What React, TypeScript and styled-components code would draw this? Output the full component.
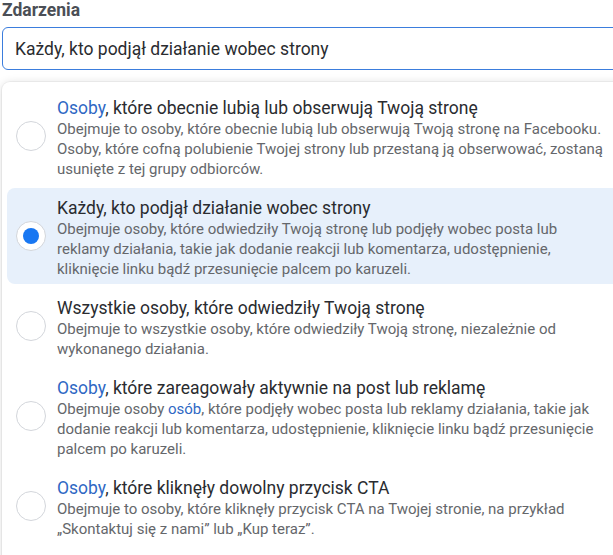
import React from "react";
import styled, { createGlobalStyle, css } from "styled-components";

const GlobalStyle = createGlobalStyle`
  html, body {
    margin: 0;
    padding: 0;
    background: #ffffff;
    overflow: hidden;
  }
  body {
    font-family: Roboto, "Liberation Sans", Arial, sans-serif;
  }
`;

const Page = styled.div`
  width: 680px;
  padding: 0 0 0 2px;
  box-sizing: border-box;
`;

const Label = styled.div`
  font-size: 17.5px;
  font-weight: 700;
  line-height: 20px;
  color: #4b4f56;
`;

const Input = styled.div`
  margin-top: 7px;
  height: 43px;
  box-sizing: border-box;
  border: 1px solid #3b7ddd;
  border-radius: 6px;
  display: flex;
  align-items: center;
  padding-left: 12px;
  font-size: 17.5px;
  color: #2a2c30;
`;

const Panel = styled.div`
  margin-top: 12px;
  background: #ffffff;
  border-radius: 8px 8px 0 0;
  box-shadow: 0 1px 10px rgba(0, 0, 0, 0.14), 0 0 0 1px rgba(0, 0, 0, 0.04);
  padding: 6px 0 0 5px;
  height: 520px;
  box-sizing: border-box;
  display: flex;
  flex-direction: column;
  gap: 4px;
`;

const Option = styled.div<{ $selected?: boolean }>`
  display: flex;
  align-items: center;
  gap: 11px;
  padding: 9px 10px 5px 9px;
  border-radius: 8px;
  ${(p) =>
    p.$selected &&
    css`
      background: #e7f0fb;
    `}
`;

const Radio = styled.span<{ $checked?: boolean }>`
  flex: none;
  width: 30px;
  height: 30px;
  box-sizing: border-box;
  border-radius: 50%;
  border: 1px solid #d3d6db;
  background: #ffffff;
  display: flex;
  align-items: center;
  justify-content: center;
  margin-top: -4px;
  &::after {
    content: "";
    display: ${(p) => (p.$checked ? "block" : "none")};
    width: 16px;
    height: 16px;
    border-radius: 50%;
    background: #1877f2;
  }
`;

const Texts = styled.div`
  display: flex;
  flex-direction: column;
`;

const Title = styled.div`
  font-size: 17.5px;
  line-height: 22px;
  color: #2a2c30;
  white-space: nowrap;
`;

const Desc = styled.div`
  font-size: 15px;
  line-height: 20px;
  color: #65676b;
  white-space: nowrap;
`;

const Line = styled.span`
  display: block;
`;

const Link = styled.span`
  color: #2f68c4;
`;

type Seg = string | { link: string };
type Item = { title: Seg[]; lines: Seg[][]; selected?: boolean };

const items: Item[] = [
  {
    title: [{ link: "Osoby" }, ", które obecnie lubią lub obserwują Twoją stronę"],
    lines: [
      ["Obejmuje to osoby, które obecnie lubią lub obserwują Twoją stronę na Facebooku."],
      ["Osoby, które cofną polubienie Twojej strony lub przestaną ją obserwować, zostaną"],
      ["usunięte z tej grupy odbiorców."],
    ],
  },
  {
    selected: true,
    title: ["Każdy, kto podjął działanie wobec strony"],
    lines: [
      ["Obejmuje osoby, które odwiedziły Twoją stronę lub podjęły wobec posta lub"],
      ["reklamy działania, takie jak dodanie reakcji lub komentarza, udostępnienie,"],
      ["kliknięcie linku bądź przesunięcie palcem po karuzeli."],
    ],
  },
  {
    title: ["Wszystkie osoby, które odwiedziły Twoją stronę"],
    lines: [
      ["Obejmuje to wszystkie osoby, które odwiedziły Twoją stronę, niezależnie od"],
      ["wykonanego działania."],
    ],
  },
  {
    title: [{ link: "Osoby" }, ", które zareagowały aktywnie na post lub reklamę"],
    lines: [
      ["Obejmuje osoby ", { link: "osób" }, ", które podjęły wobec posta lub reklamy działania, takie jak"],
      ["dodanie reakcji lub komentarza, udostępnienie, kliknięcie linku bądź przesunięcie"],
      ["palcem po karuzeli."],
    ],
  },
  {
    title: [{ link: "Osoby" }, ", które kliknęły dowolny przycisk CTA"],
    lines: [
      ["Obejmuje to osoby, które kliknęły przycisk CTA na Twojej stronie, na przykład"],
      ["„Skontaktuj się z nami” lub „Kup teraz”."],
    ],
  },
];

const renderSegs = (segs: Seg[]) =>
  segs.map((s, i) =>
    typeof s === "string" ? (
      <React.Fragment key={i}>{s}</React.Fragment>
    ) : (
      <Link key={i}>{s.link}</Link>
    )
  );

export default function App() {
  return (
    <>
      <GlobalStyle />
      <Page>
        <Label>Zdarzenia</Label>
        <Input>Każdy, kto podjął działanie wobec strony</Input>
        <Panel>
          {items.map((it, i) => (
            <Option key={i} $selected={it.selected}>
              <Radio $checked={it.selected} />
              <Texts>
                <Title>{renderSegs(it.title)}</Title>
                <Desc>
                  {it.lines.map((l, j) => (
                    <Line key={j}>{renderSegs(l)}</Line>
                  ))}
                </Desc>
              </Texts>
            </Option>
          ))}
        </Panel>
      </Page>
    </>
  );
}
